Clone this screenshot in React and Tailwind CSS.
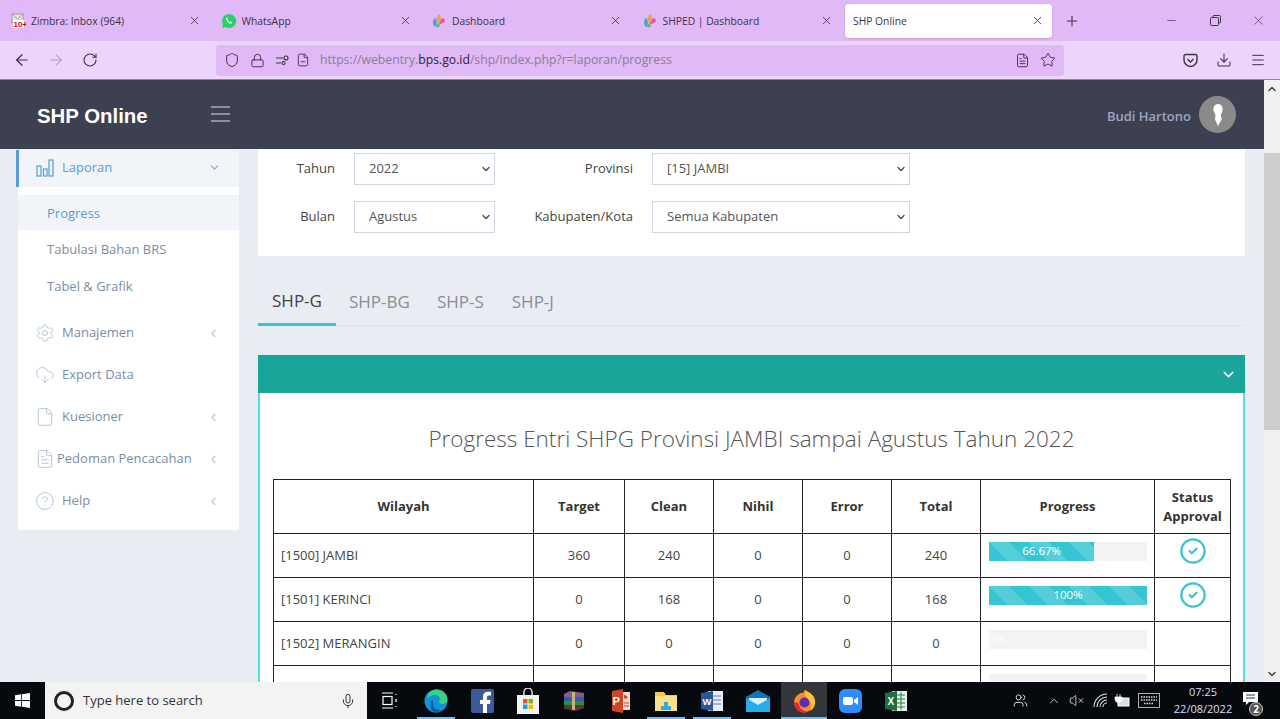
import { ArrowLeft, ArrowRight, RotateCw, Shield, Lock, Star, Download, Menu, X, Plus, Minus, Mic, ChevronUp, ChevronDown, ChevronLeft, Settings, CloudDownload, File, FileText, CircleHelp, CircleCheck, Users, VolumeX, FileMinus } from 'lucide-react';

const sans = { fontFamily: '"Open Sans", sans-serif' };

function GridFavicon() {
  return (
    <svg width="16" height="16" viewBox="0 0 16 16" className="shrink-0">
      <path d="M2 9c0-2 1.500-4 3-4l1 4-1 5c-2 0-3-3-3-5z" fill="#4f9fe0" />
      <path d="M6 6c0-2 1-5 3-5l1 4-2 6c-1 0-2-3-2-5z" fill="#f2a33a" />
      <path d="M8 11l2-5c2-1 4 0 4 1 0 2-3 4-6 4z" fill="#e9589a" />
      <path d="M5 12l3-2 1 3-3 2z" fill="#5dbb7a" />
    </svg>
  );
}

function ZimbraFavicon() {
  return (
    <svg width="16" height="16" viewBox="0 0 16 16" className="shrink-0">
      <rect x="2" y="1" width="11" height="9" fill="#e4e4e4" stroke="#888" strokeWidth="0.7" />
      <path d="M2 1l5.500 5L13 1" fill="none" stroke="#888" strokeWidth="0.7" />
      <rect x="3" y="7" width="11" height="8" fill="#fff" />
      <text x="3.500" y="14" fontSize="8" fontWeight="700" fill="#e00000" fontFamily="Liberation Sans">10+</text>
    </svg>
  );
}

function WhatsAppFavicon() {
  return (
    <svg width="16" height="16" viewBox="0 0 16 16" className="shrink-0">
      <path d="M8 1a7 7 0 0 0-6 10.500L1 15l3.600-1A7 7 0 1 0 8 1z" fill="#25d366" />
      <path d="M5.600 4.400c-.9.700-.9 2 .2 3.600 1.200 1.700 2.800 2.900 4.200 2.600.8-.2 1.300-.8 1.200-1.400l-1.700-.9-.8.800c-.9-.3-1.800-1.200-2.200-2.100l.7-.8-.8-1.800z" fill="#fff" />
    </svg>
  );
}

const browserTabs = [
  { title: 'Zimbra: Inbox (964)', icon: <ZimbraFavicon /> },
  { title: 'WhatsApp', icon: <WhatsAppFavicon /> },
  { title: 'Dashboard', icon: <GridFavicon /> },
  { title: 'SHPED | Dashboard', icon: <GridFavicon /> },
];

function BrowserChrome() {
  return (
    <div className="shrink-0 text-[#3b3346]" style={sans}>
      <div className="h-[41px] bg-[#e0b9f6] flex items-center pl-[3px]">
        {browserTabs.map((t) => (
          <div key={t.title} className="w-[207px] mr-[3.5px] h-[34px] flex items-center pl-[7px] pr-[9px] gap-[5px]">
            {t.icon}
            <span className="text-[10.300px] pt-[2px] flex-1 truncate">{t.title}</span>
            <X className="w-[13px] h-[13px]" strokeWidth={1.5} />
          </div>
        ))}
        <div className="w-[207px] h-[34px] bg-white rounded-[4px] shadow flex items-center pl-[8px] pr-[8px]">
          <span className="text-[10.300px] pt-[2px] flex-1">SHP Online</span>
          <X className="w-[13px] h-[13px]" strokeWidth={1.5} />
        </div>
        <Plus className="w-[16px] h-[16px] ml-[12px]" strokeWidth={1.6} />
        <div className="ml-auto flex items-center">
          <div className="w-[44px] flex justify-center"><Minus className="w-[13px] h-[13px]" strokeWidth={1.2} /></div>
          <div className="w-[44px] flex justify-center">
            <svg width="11" height="11" viewBox="0 0 11 11" fill="none" stroke="currentColor"><rect x="0.500" y="2.500" width="8" height="8" rx="1" /><path d="M3 2.500V1.500a1 1 0 0 1 1-1h5.500a1 1 0 0 1 1 1V7a1 1 0 0 1-1 1H8.500" /></svg>
          </div>
          <div className="w-[43px] flex justify-center"><X className="w-[15px] h-[15px]" strokeWidth={1} /></div>
        </div>
      </div>
      <div className="h-[39px] bg-[#edd4fb] border-b border-[#8c8496] flex items-center">
        <div className="w-[216px] flex items-center pl-[13px] gap-[16px]">
          <ArrowLeft className="w-[18px] h-[18px]" strokeWidth={1.6} />
          <ArrowRight className="w-[18px] h-[18px] text-[#a99bb5]" strokeWidth={1.4} />
          <RotateCw className="w-[16px] h-[16px] ml-[1px]" strokeWidth={1.6} />
        </div>
        <div className="w-[848px] h-[31px] bg-[#e0b9f6] rounded-[4px] flex items-center pl-[8px] pr-[8px]">
          <Shield className="w-[16px] h-[16px]" strokeWidth={1.5} />
          <Lock className="w-[15px] h-[15px] ml-[10px]" strokeWidth={1.5} />
          <svg width="14" height="12" viewBox="0 0 14 12" fill="none" stroke="currentColor" strokeWidth="1.100" className="ml-[11px]"><path d="M0 4h7M0 9h5" /><circle cx="10" cy="4" r="2" /><circle cx="7.500" cy="9" r="1.500" /></svg>
          <FileMinus className="w-[14px] h-[14px] ml-[6px]" strokeWidth={1.5} />
          <span className="ml-[10px] text-[12.200px] text-[#8a7d96] flex-1">
            https://webentry.<span className="text-[#2a2433]">bps.go.id</span>/shp/index.php?r=laporan/progress
          </span>
          <FileText className="w-[15px] h-[15px] mr-[10px]" strokeWidth={1.5} />
          <Star className="w-[16px] h-[16px]" strokeWidth={1.4} />
        </div>
        <div className="flex-1 flex items-center justify-end pr-[14px] gap-[18px]">
          <svg width="15" height="15" viewBox="0 0 15 15" fill="none" stroke="currentColor" strokeWidth="1.400"><path d="M1 3a1.500 1.500 0 0 1 1.500-1.500h10A1.500 1.500 0 0 1 14 3v4a6.500 6.500 0 0 1-13 0z" /><path d="M4.500 6l3 3 3-3" /></svg>
          <Download className="w-[16px] h-[16px]" strokeWidth={1.6} />
          <Menu className="w-[16px] h-[16px]" strokeWidth={1.5} />
        </div>
      </div>
    </div>
  );
}

function BarsIcon() {
  return (
    <svg width="18" height="18" viewBox="0 0 18 18" fill="none" stroke="#5c9bd6" strokeWidth="1.200">
      <rect x="1" y="7" width="4" height="10" />
      <rect x="7.500" y="10" width="3.500" height="7" />
      <rect x="13" y="1" width="4" height="16" />
    </svg>
  );
}

const sideItems = [
  { label: 'Manajemen', icon: <Settings className="w-[20px] h-[20px]" strokeWidth={1.1} />, arrow: true },
  { label: 'Export Data', icon: <CloudDownload className="w-[20px] h-[20px]" strokeWidth={1.1} /> },
  { label: 'Kuesioner', icon: <File className="w-[20px] h-[20px]" strokeWidth={1.1} />, arrow: true },
  { label: 'Pedoman Pencacahan', icon: <FileText className="w-[20px] h-[20px]" strokeWidth={1.1} />, arrow: true, tight: true },
  { label: 'Help', icon: <CircleHelp className="w-[20px] h-[20px]" strokeWidth={1.1} />, arrow: true },
];

function Sidebar() {
  return (
    <aside className="w-[221px] ml-[18px] h-[380px] bg-white shrink-0 text-[13px] text-[#7a8ea8]">
      <div className="relative h-[37px] bg-[#f1f5f9] flex items-center pl-[18px] pr-[18px] pb-[2px] text-[#5c9bd6]">
        <div className="absolute -left-[2px] top-0 bottom-0 w-[3px] bg-[#5c9bd6]" />
        <BarsIcon />
        <span className="ml-[8px] flex-1">Laporan</span>
        <ChevronDown className="w-[13px] h-[13px] text-[#8fa6bd]" strokeWidth={2} />
      </div>
      <div className="h-[8px]" />
      <div className="h-[35px] bg-[#f1f5f9] flex items-center pl-[29px] pt-[2px] text-[#5c9bd6]">Progress</div>
      <div className="h-[37px] flex items-center pl-[29px] pt-[2px]">Tabulasi Bahan BRS</div>
      <div className="h-[36px] flex items-center pl-[29px] pt-[4px]">Tabel &amp; Grafik</div>
      <div className="h-[8px]" />
      {sideItems.map((it) => (
        <div key={it.label} className="h-[42px] flex items-center pl-[17px] pr-[19px] pt-[2px]">
          <span className="text-[#afc1d5] shrink-0">{it.icon}</span>
          <span className={`flex-1 whitespace-nowrap ${it.tight ? 'ml-[2px]' : 'ml-[7px]'}`}>{it.label}</span>
          {it.arrow && <ChevronLeft className="w-[13px] h-[13px] text-[#b9c8d8]" strokeWidth={2} />}
        </div>
      ))}
    </aside>
  );
}

function Select({ value, width }) {
  return (
    <div className={`relative ${width}`}>
      <select defaultValue={value} className="appearance-none w-full h-[32px] bg-white border border-[#d0d6e6] pl-[14px] text-[13px] text-[#555] outline-none">
        <option>{value}</option>
      </select>
      <ChevronDown className="absolute right-[3px] top-[10px] w-[12px] h-[12px] text-[#444] pointer-events-none" strokeWidth={2.400} />
    </div>
  );
}

// last row is almost fully hidden behind the taskbar, only its bar shows
const rows = [
  { name: '[1500] JAMBI', target: 360, clean: 240, nihil: 0, error: 0, total: 240, pct: 66.67, label: '66.67%', ok: true },
  { name: '[1501] KERINCI', target: 0, clean: 168, nihil: 0, error: 0, total: 168, pct: 100, label: '100%', ok: true },
  { name: '[1502] MERANGIN', target: 0, clean: 0, nihil: 0, error: 0, total: 0, pct: 0, label: '0%' },
  { name: '', target: '', clean: '', nihil: '', error: '', total: '', pct: 0, label: '' },
];

const thClass = 'border border-[#222] font-bold text-[13px] text-[#333] leading-[19px]';
const tdClass = 'border border-[#222] text-center text-[13px] text-[#444]';

function ProgressBar({ pct, label }) {
  return (
    <div className="h-[19px] bg-[#f3f3f3] text-[11.500px] leading-[17px] text-white -mt-[8px]">
      <div
        className="h-full bg-[#36c6d3] text-center whitespace-nowrap bg-[linear-gradient(45deg,rgba(255,255,255,.15)_25%,transparent_25%,transparent_50%,rgba(255,255,255,.15)_50%,rgba(255,255,255,.15)_75%,transparent_75%,transparent)] bg-[length:40px_40px]"
        style={{ width: `${pct}%` }}
      >
        {label}
      </div>
    </div>
  );
}

function ProgressTable() {
  return (
    <table className="w-[957px] table-fixed border-collapse">
      <colgroup>
        <col className="w-[260px]" />
        <col className="w-[91px]" />
        <col className="w-[89px]" />
        <col className="w-[89px]" />
        <col className="w-[89px]" />
        <col className="w-[89px]" />
        <col className="w-[174px]" />
        <col className="w-[76px]" />
      </colgroup>
      <thead>
        <tr className="h-[54px]">
          <th className={thClass}>Wilayah</th>
          <th className={thClass}>Target</th>
          <th className={thClass}>Clean</th>
          <th className={thClass}>Nihil</th>
          <th className={thClass}>Error</th>
          <th className={thClass}>Total</th>
          <th className={thClass}>Progress</th>
          <th className={thClass}>Status Approval</th>
        </tr>
      </thead>
      <tbody>
        {rows.map((r, i) => (
          <tr key={i} className="h-[44px]">
            <td className="border border-[#222] text-[13px] text-[#444] pl-[7px]">{r.name}</td>
            <td className={tdClass}>{r.target}</td>
            <td className={tdClass}>{r.clean}</td>
            <td className={tdClass}>{r.nihil}</td>
            <td className={tdClass}>{r.error}</td>
            <td className={tdClass}>{r.total}</td>
            <td className="border border-[#222] pl-[8px] pr-[7px] align-middle"><ProgressBar pct={r.pct} label={r.label} /></td>
            <td className="border border-[#222] align-middle">
              {r.ok && <CircleCheck className="w-[28px] h-[28px] mx-auto -mt-[9px] text-[#36c6d3]" strokeWidth={1.900} />}
            </td>
          </tr>
        ))}
      </tbody>
    </table>
  );
}

function MainContent() {
  return (
    <main className="w-[987px] ml-[19px] shrink-0 text-[#555]">
      <div className="h-[107px] bg-white pt-[4px] text-[13px]">
        <div className="flex items-center h-[32px]">
          <span className="w-[77px] text-right text-[#444]">Tahun</span>
          <div className="ml-[19px]"><Select value="2022" width="w-[141px]" /></div>
          <span className="w-[138px] text-right text-[#444]">Provinsi</span>
          <div className="ml-[19px]"><Select value="[15] JAMBI" width="w-[258px]" /></div>
        </div>
        <div className="flex items-center h-[32px] mt-[16px]">
          <span className="w-[77px] text-right text-[#444]">Bulan</span>
          <div className="ml-[19px]"><Select value="Agustus" width="w-[141px]" /></div>
          <span className="w-[138px] text-right text-[#444]">Kabupaten/Kota</span>
          <div className="ml-[19px]"><Select value="Semua Kabupaten" width="w-[258px]" /></div>
        </div>
      </div>
      <div className="mt-[25px] h-[45px] border-b border-[#dde1ea] flex text-[17px] text-[#8a8f96]">
        <div className="w-[78px] h-[45px] border-b-[3px] border-[#36c6d3] flex items-center justify-center text-[#444] pb-[2px]">SHP-G</div>
        <div className="ml-[13px] flex items-center pb-[2px]">SHP-BG</div>
        <div className="ml-[27px] flex items-center pb-[2px]">SHP-S</div>
        <div className="ml-[28px] flex items-center pb-[2px]">SHP-J</div>
      </div>
      <div className="mt-[29px]">
        <div className="h-[38px] bg-[#1aa59a] flex items-center justify-end pr-[8px]">
          <ChevronDown className="w-[17px] h-[17px] text-white" strokeWidth={2} />
        </div>
        <div className="bg-white border-x-2 border-[#57dcdc] pl-[13px] h-[400px]">
          <h1 className="h-[86px] -ml-[13px] pt-[28px] text-center text-[22.500px] leading-[36px] font-light text-[#555]">
            Progress Entri SHPG Provinsi JAMBI sampai Agustus Tahun 2022
          </h1>
          <ProgressTable />
        </div>
      </div>
    </main>
  );
}

function WebPage() {
  return (
    <div className="flex-1 min-h-0 flex overflow-hidden" style={sans}>
      <div className="flex-1 min-w-0 flex flex-col bg-[#e9ecf3]">
        <header className="h-[69px] shrink-0 bg-[#3d4051] flex items-center">
          <span className="ml-[37px] pt-[4px] text-[20.400px] font-bold text-white" style={{ fontFamily: '"Liberation Sans", sans-serif' }}>SHP Online</span>
          <div className="ml-[63px] -mt-[1px] w-[19px] flex flex-col gap-[5px]">
            <div className="h-[2px] bg-[#8b8f9e]" />
            <div className="h-[2px] bg-[#8b8f9e]" />
            <div className="h-[2px] bg-[#8b8f9e]" />
          </div>
          <span className="ml-auto pt-[4px] text-[13px] font-semibold text-[#9ba6c4]">Budi Hartono</span>
          <div className="ml-[8px] mr-[28px] w-[37px] h-[37px] rounded-full bg-[#8a8a8a] flex items-center justify-center">
            <svg width="12" height="22" viewBox="0 0 12 22"><path d="M6 0c3.500 0 5 3 4.500 6.500-.3 2-1.500 3-1.500 5 0 2 1 3 .5 4L6 22l-3-6.500c-.5-1 .5-2 .5-4 0-2-1.800-3-2-5C1 3 2.500 0 6 0z" fill="#fff" /></svg>
          </div>
        </header>
        <div className="flex-1 min-h-0 flex overflow-hidden">
          <div className="pt-[1px]"><Sidebar /></div>
          <MainContent />
        </div>
      </div>
      <div className="w-[16px] shrink-0 bg-[#f0f0f0] flex flex-col items-center">
        <ChevronUp className="w-[12px] h-[12px] mt-[3px] text-[#444]" strokeWidth={3} />
        <div className="w-full h-[277px] mt-[58px] bg-[#cdcdcd]" />
        <ChevronDown className="w-[12px] h-[12px] mt-auto mb-[2px] text-[#444]" strokeWidth={3} />
      </div>
    </div>
  );
}

function TaskIcon({ active, open, children }) {
  return (
    <div className={`relative w-[46px] h-full flex items-center justify-center ${active ? 'bg-[#33373b]' : ''}`}>
      {children}
      {open && <div className={`absolute bottom-0 h-[2px] bg-[#76b9ed] ${active ? 'left-0 right-0' : 'left-[4px] right-[4px]'}`} />}
    </div>
  );
}

function Taskbar() {
  return (
    <div className="h-[37px] shrink-0 bg-[#060a0e] flex items-center text-white" style={sans}>
      <div className="w-[45px] h-full flex items-center justify-center">
        <svg width="15" height="15" viewBox="0 0 15 15" fill="#fff"><path d="M0 2.200l6.200-.9v5.800H0zM7 1.200L15 0v7.100H7zM0 7.900h6.200v5.800L0 12.800zM7 7.900h8V15l-8-1.200z" /></svg>
      </div>
      <div className="w-[322px] h-full bg-[#f3f3f3] flex items-center pl-[9px] pr-[11px] text-[#333]">
        <div className="w-[20px] h-[20px] rounded-full border-[3px] border-[#222]" />
        <span className="ml-[9px] text-[13px] flex-1">Type here to search</span>
        <Mic className="w-[16px] h-[16px]" strokeWidth={1.500} />
      </div>
      <div className="w-[46px] flex justify-center">
        <svg width="16" height="17" viewBox="0 0 16 17" fill="none" stroke="#fff" strokeWidth="1.200"><path d="M0 1h11M0 16h11" /><rect x="1" y="4.500" width="9" height="8" /><path d="M14 2v1M14 7v3M14 14v1" /></svg>
      </div>
      <div className="flex h-full">
        <TaskIcon open>
          <svg width="24" height="24" viewBox="0 0 24 24"><circle cx="12" cy="12" r="11.500" fill="#1593d8" /><path d="M3 9C4 3 9 .5 13 .5c6 0 10.500 4.500 10.500 10 0 3-2.500 4.500-5 4.500-2 0-3.500-.8-3.500-2 0-1 1-1.500 1-3 0-2-2-4-5-4-4 0-7 2-8 3z" fill="#37d27f" /><path d="M9 14c0 4 3 7 7 7 1 0 2-.2 3-.7-2 2-4.500 3-7 3-3 0-5-2-5.500-6C6 13 7.500 11 9 10.500c-.3 1-.1 2.500 0 3.500z" fill="#0c5fa8" /></svg>
        </TaskIcon>
        <TaskIcon>
          <svg width="23" height="24" viewBox="0 0 23 24"><rect width="23" height="24" rx="2" fill="#3b5a9a" /><path d="M16 24V15h3l.5-4H16V8.500c0-1.200.4-2 2-2h2V3c-.5 0-1.600-.2-3-.2-3 0-5 1.800-5 5V11H9v4h3v9z" fill="#fff" /></svg>
        </TaskIcon>
        <TaskIcon>
          <svg width="22" height="26" viewBox="0 0 22 26"><path d="M7 7V4a4 4 0 0 1 8 0v3" fill="none" stroke="#e8e8e8" strokeWidth="1.400" /><rect y="7" width="22" height="19" fill="#f3f3f3" /><rect x="6" y="11" width="4.500" height="4.500" fill="#f25022" /><rect x="11.500" y="11" width="4.500" height="4.500" fill="#7fba00" /><rect x="6" y="16.500" width="4.500" height="4.500" fill="#00a4ef" /><rect x="11.500" y="16.500" width="4.500" height="4.500" fill="#ffb900" /></svg>
        </TaskIcon>
        <TaskIcon>
          <svg width="22" height="20" viewBox="0 0 22 20"><path d="M1 3l6-3 14 2v4L1 6z" fill="#8a5a8f" /><rect x="1" y="6" width="20" height="4" fill="#2b5fb0" /><rect x="1" y="10" width="20" height="4" fill="#2f8d3a" /><path d="M1 14h20v3l-8 3-12-2z" fill="#5a3a30" /><rect x="9" y="1" width="3" height="18" fill="#c9b27a" /></svg>
        </TaskIcon>
        <TaskIcon>
          <svg width="22" height="24" viewBox="0 0 22 24"><path d="M3 2l11-2v24L3 22z" fill="#d04525" /><path d="M14 3h7v18h-7z" fill="#f0d9d2" /><path d="M15 6a3.500 3.500 0 0 1 3.500 3.500H15z" fill="#d04525" /><path d="M15 14h5M15 17h5" stroke="#d04525" /><text x="3.500" y="16" fontSize="11" fontWeight="700" fill="#fff" fontFamily="Liberation Sans">P</text></svg>
        </TaskIcon>
        <TaskIcon open>
          <svg width="22" height="20" viewBox="0 0 22 20"><path d="M0 1h9l2 3h11v16H0z" fill="#f6c94c" /><rect x="0" y="5" width="22" height="15" fill="#fbe08c" /><path d="M6 15h10v4H6z" fill="#38a7dd" /><path d="M9 11h4v4H9z" fill="#38a7dd" /></svg>
        </TaskIcon>
        <TaskIcon open>
          <svg width="22" height="22" viewBox="0 0 22 22"><rect x="7" y="1" width="15" height="20" fill="#e9edf5" /><path d="M12 6h8M12 10h8M12 14h8" stroke="#5b7fbd" strokeWidth="1" /><path d="M0 3l12-2v20L0 19z" fill="#2b579a" /><text x="1.500" y="14.500" fontSize="9.500" fontWeight="700" fill="#fff" fontFamily="Liberation Sans">W</text></svg>
        </TaskIcon>
        <TaskIcon>
          <svg width="24" height="22" viewBox="0 0 24 22"><path d="M0 7l12-7 12 7v15H0z" fill="#0e77bd" /><path d="M3 8h18v6l-9 5-9-5z" fill="#d8f1fb" /><path d="M0 8l12 7 12-7v14H0z" fill="#27aee8" /></svg>
        </TaskIcon>
        <TaskIcon active open>
          <svg width="24" height="24" viewBox="0 0 24 24"><circle cx="12" cy="13.500" r="10" fill="#ff8a2a" /><path d="M12 1c6 2 10 5 11 10 .8 4-1 9-5 11 2-3 2-7-.5-10-1-1.200-3-3-4-5-.6-1.500-1-4-1.500-6z" fill="#ffc22e" /><circle cx="12.500" cy="13.500" r="5" fill="#5a2fb0" /><path d="M2 13c0 6 5 10.500 10.500 10.500 1.800 0 3.500-.5 5-1.300-5 1-10-2-11-8z" fill="#e8243e" /></svg>
        </TaskIcon>
        <TaskIcon>
          <svg width="23" height="24" viewBox="0 0 23 24"><rect width="23" height="24" rx="6" fill="#2d8cff" /><rect x="4" y="8" width="10" height="8" rx="2" fill="#fff" /><path d="M15 11l4-3v8l-4-3z" fill="#fff" /></svg>
        </TaskIcon>
        <TaskIcon>
          <svg width="22" height="22" viewBox="0 0 22 22"><rect x="7" y="1" width="15" height="20" fill="#e8f1ea" /><path d="M12 5h8M12 9h8M12 13h8M12 17h8M16 2v18" stroke="#2d7a47" strokeWidth="1" /><path d="M0 3l12-2v20L0 19z" fill="#1e6e41" /><text x="2.500" y="14.500" fontSize="10" fontWeight="700" fill="#fff" fontFamily="Liberation Sans">X</text></svg>
        </TaskIcon>
      </div>
      <div className="ml-auto flex items-center h-full">
        <Users className="w-[15px] h-[15px] mr-[19px]" strokeWidth={1.300} />
        <ChevronUp className="w-[14px] h-[14px] mr-[8px]" strokeWidth={1.300} />
        <VolumeX className="w-[15px] h-[15px] mr-[9px]" strokeWidth={1.200} />
        <svg width="15" height="15" viewBox="0 0 15 15" fill="none" stroke="#ddd" strokeWidth="1.100" className="mr-[6px]"><path d="M1 14A13 13 0 0 1 14 1M4 14a10 10 0 0 1 10-10M7 14a7 7 0 0 1 7-7M10 14a4 4 0 0 1 4-4" /></svg>
        <svg width="17" height="14" viewBox="0 0 17 14" className="mr-[7px]"><rect x="4" y="4" width="11" height="8" fill="#ddd" stroke="#fff" /><path d="M3 0v3M6 0v3M1 3h7v2a3 3 0 0 1-7 0z" stroke="#fff" fill="#fff" strokeWidth="0.800" /></svg>
        <svg width="22" height="15" viewBox="0 0 22 15" fill="none" stroke="#ddd" strokeWidth="0.800" className="mr-[15px]"><rect x="0.500" y="0.500" width="21" height="14" /><path d="M3 4h16M3 7h16M6 10.500h10" strokeDasharray="1.500 1" strokeWidth="1.400" /></svg>
        <div className="w-[56px] -mt-[2px] text-center text-[11px] leading-[17px] text-[#dde]">
          <div>07:25</div>
          <div className="whitespace-nowrap -mx-[4px]">22/08/2022</div>
        </div>
        <div className="relative w-[46px] h-full ml-[3px] flex items-center justify-center">
          <svg width="15" height="14" viewBox="0 0 15 14" className="-mt-[4px] -ml-[14px]"><path d="M0 0h15v10H6l-3 3v-3H0z" fill="#fff" /><path d="M3 3h9M3 6h9" stroke="#333" /></svg>
          <div className="absolute right-[17px] bottom-[3px] w-[14px] h-[14px] rounded-full bg-[#555] border border-[#ccc] text-[10px] leading-[12px] text-center font-bold">2</div>
        </div>
      </div>
    </div>
  );
}

export default function App() {
  return (
    <div className="w-[1280px] h-[719px] flex flex-col overflow-hidden bg-white">
      <BrowserChrome />
      <WebPage />
      <Taskbar />
    </div>
  );
}
